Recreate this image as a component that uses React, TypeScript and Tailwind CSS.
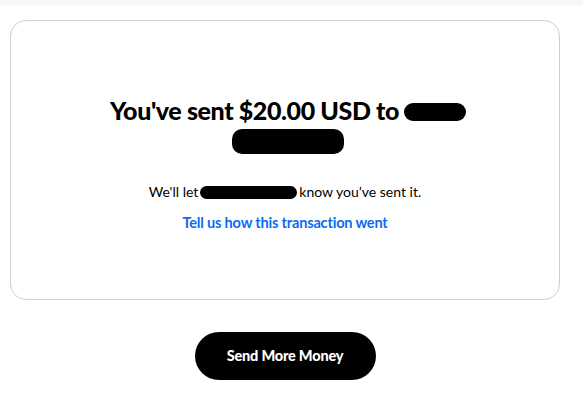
export default function App() {
  return (
    <div className="w-[583px] h-[404px] bg-white overflow-hidden" style={{ fontFamily: "Lato, 'Liberation Sans', sans-serif" }}>
      <div className="h-[5px] bg-[#f7f7f7]" />
      <div className="ml-[10px] w-[550px]">
        <div className="mt-[15px] h-[280px] rounded-[16px] border border-[#cfcfcf] flex flex-col items-center pt-[73px]">
          <h1 className="text-[25px] leading-[32px] font-black text-black tracking-[-0.4px] text-center">
            <div className="flex items-center justify-center ml-[6px]">
              <span>You've sent $20.00 USD to</span>
              <span className="inline-block ml-[5px] w-[62px] h-[18px] rounded-full bg-black mt-[4px]" />
            </div>
            <div className="flex justify-center">
              <span className="inline-block w-[112px] h-[25px] rounded-[10px] bg-black mt-[3px] ml-[6px]" />
            </div>
          </h1>
          <p className="mt-[29px] text-[14px] leading-[18px] text-black flex items-center">
            <span>We'll let</span>
            <span className="inline-block mx-[2px] w-[97px] h-[13px] rounded-full bg-black" />
            <span>know you’ve sent it.</span>
          </p>
          <a className="mt-[13px] text-[14.6px] leading-[18px] font-bold text-[#0a6cf0] tracking-[-0.2px]">Tell us how this transaction went</a>
        </div>
        <div className="flex justify-center mt-[32px]">
          <button className="w-[181px] h-[48px] rounded-full bg-black text-white text-[14.5px] font-black tracking-[-0.2px]">Send More Money</button>
        </div>
      </div>
    </div>
  );
}
